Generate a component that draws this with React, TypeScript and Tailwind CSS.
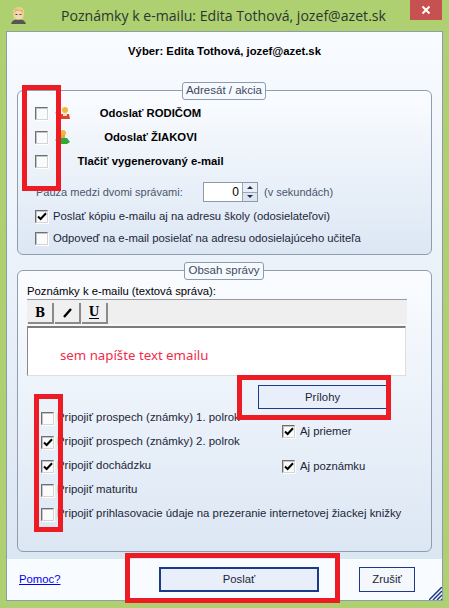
import type { ReactNode } from "react";

const font = { fontFamily: '"Liberation Sans", Arial, sans-serif' };

function CheckBox({ checked = false, className = "" }: { checked?: boolean; className?: string }) {
  return (
    <span
      className={`flex size-[13px] shrink-0 items-center justify-center border border-t-[#6f6f6f] border-l-[#6f6f6f] border-r-[#d4d4d4] border-b-[#d4d4d4] bg-[#f9fbfd] shadow-[1px_1px_0_#fff,inset_1px_1px_0_#c4c4c4] ${className}`}
    >
      {checked && (
        <svg width="10" height="9" viewBox="0 0 10 9">
          <path d="M1 4.5 L3.6 7 L9 1.2" fill="none" stroke="#000" strokeWidth="2" />
        </svg>
      )}
    </span>
  );
}

function Legend({ children, className }: { children: ReactNode; className: string }) {
  return (
    <span
      className={`absolute top-[-9px] flex h-[18px] items-center justify-center rounded-[3px] border border-[#8c9bb2] bg-[#f6f9fe] text-[11.5px] text-[#3c4a62] ${className}`}
    >
      {children}
    </span>
  );
}

function Group({ legend, legendClass, className, children }: { legend: string; legendClass: string; className: string; children: ReactNode }) {
  return (
    <div className={`relative mx-[10px] rounded-[6px] border border-[#8f9db1] bg-gradient-to-b from-[#fafcff] to-[#dce7f4] ${className}`}>
      <Legend className={legendClass}>{legend}</Legend>
      {children}
    </div>
  );
}

function Overlay({ className }: { className: string }) {
  return <div className={`pointer-events-none absolute border-[5px] border-[#ed1c24] ${className}`} />;
}

function ParentIcon() {
  return (
    <svg width="16" height="16" viewBox="0 0 16 16" className="shrink-0">
      <path d="M0 8 L4 4 L4 12 Z" fill="#7fb0ea" />
      <circle cx="10" cy="5" r="3" fill="#f0b93a" />
      <path d="M5 14 L6 9 L14 9 L15 14 Z" fill="#e0402e" />
      <rect x="8" y="8" width="4" height="3" fill="#f5e6c0" />
    </svg>
  );
}

function StudentIcon() {
  return (
    <svg width="16" height="16" viewBox="0 0 16 16" className="shrink-0">
      <path d="M0 11 L3 9 L3 13 Z" fill="#3c9a3c" />
      <circle cx="8" cy="4" r="3" fill="#f0b93a" />
      <rect x="5" y="6" width="5" height="4" fill="#e8a838" />
      <path d="M4 15 L6 9 L12 9 L15 13 L12 15 Z" fill="#2ea83a" />
    </svg>
  );
}

function Avatar() {
  return (
    <svg width="17" height="17" viewBox="0 0 17 17" className="shrink-0">
      <path d="M3 8 C2 2 6 0 9 0 C13 0 15 3 14 8 L13 12 L4 12 Z" fill="#e8d28a" />
      <ellipse cx="8.5" cy="8" rx="4" ry="4.5" fill="#f6d6b4" />
      <path d="M4 7 C6 3 10 3 13 6 L13 3 L5 2 Z" fill="#d9bc6a" />
      <rect x="5.5" y="7" width="2" height="1" fill="#444" />
      <rect x="9.5" y="7" width="2" height="1" fill="#444" />
      <path d="M1 17 C2 13 5 12 8 13 C12 12 15 13 16 17 Z" fill="#555" />
    </svg>
  );
}

function AddresseeRow({ icon, label }: { icon?: ReactNode; label: string }) {
  return (
    <div className="flex h-[24px] items-center">
      <CheckBox />
      <span className="ml-[6px] flex w-[17px] justify-center">{icon}</span>
      <span className="w-[159px] text-center text-[11.3px] font-bold text-black">{label}</span>
    </div>
  );
}

function AttachRow({ checked, label, extra, raised }: { checked?: boolean; label: string; extra?: string; raised?: boolean }) {
  return (
    <div className="flex h-[24px] items-center">
      <CheckBox checked={checked} />
      <span className="ml-[3px] w-[225px] whitespace-nowrap text-[11.4px] text-[#1c2638]">{label}</span>
      {extra && (
        <span className={`flex items-center ${raised ? "-translate-y-[11px]" : ""}`}>
          <CheckBox checked />
          <span className="ml-[5px] text-[11.3px] text-[#1c2638]">{extra}</span>
        </span>
      )}
    </div>
  );
}

function Tool({ children, className = "" }: { children: ReactNode; className?: string }) {
  return (
    <span
      className={`flex h-[21px] w-[26px] items-center justify-center border-r-2 border-b-2 border-[#8a8a8a] bg-[#f0f0f0] text-[12px] font-bold text-black ${className}`}
      style={{ fontFamily: '"DejaVu Serif", serif' }}
    >
      {children}
    </span>
  );
}

export default function App() {
  return (
    <div className="relative flex h-[608px] w-[449px] flex-col overflow-hidden bg-[#aed070]" style={font}>
      {/* title bar */}
      <div className="relative flex h-[31px] shrink-0 items-center pl-[10px]">
        <Avatar />
        <span className="ml-[34px] whitespace-nowrap text-[14.1px] text-[#2c3630]" style={{ fontFamily: '"Open Sans", sans-serif' }}>
          Poznámky k e-mailu: Edita Tothová, jozef@azet.sk
        </span>
        <span className="absolute top-0 right-[7px] flex h-[20px] w-[32px] items-center justify-center bg-[#c75050]">
          <svg width="10" height="10" viewBox="0 0 10 10">
            <path d="M1.5 1.5 L8.5 8.5 M8.5 1.5 L1.5 8.5" stroke="#fff" strokeWidth="2" />
          </svg>
        </span>
      </div>

      {/* client */}
      <div className="mx-[6px] flex h-[570px] flex-col border border-[#8d9ca8] bg-[#f8fbff]">
        <div className="flex h-[527px] flex-col bg-gradient-to-b from-[#f8fbff] to-[#dbe6f3]">
          <div className="flex h-[46px] items-center justify-center pb-[8px] text-[11.3px] font-bold text-black">
            Výber: Edita Tothová, jozef@azet.sk
          </div>

          <Group legend="Adresát / akcia" legendClass="left-[164px] w-[84px]" className="mt-[12px] h-[165px] pt-[10px] pl-[17px]">
            <AddresseeRow icon={<ParentIcon />} label="Odoslať RODIČOM" />
            <AddresseeRow icon={<StudentIcon />} label="Odoslať ŽIAKOVI" />
            <AddresseeRow label="Tlačiť vygenerovaný e-mail" />
            <div className="mt-[7px] flex h-[24px] items-center text-[11px] text-[#4a566b]">
              <span className="ml-[1px] w-[167px] whitespace-nowrap">Pauza medzi dvomi správami:</span>
              <span className="flex h-[20px] w-[55px] border border-[#8e9aac] bg-white">
                <span className="flex flex-1 items-center justify-end pr-[3px] text-[12px] text-black">0</span>
                <span className="flex w-[15px] flex-col border-l border-[#9aa6b6]">
                  <span className="flex flex-1 items-center justify-center border-b border-[#9aa6b6] bg-[#e9eff7]">
                    <span className="border-x-[3px] border-b-[3px] border-x-transparent border-b-[#1c2f4a]" />
                  </span>
                  <span className="flex flex-1 items-center justify-center bg-[#dde5f0]">
                    <span className="border-x-[3px] border-t-[3px] border-x-transparent border-t-[#1c2f4a]" />
                  </span>
                </span>
              </span>
              <span className="ml-[6px] whitespace-nowrap">(v sekundách)</span>
            </div>
            <div className="mt-[1px] flex h-[22px] items-center text-[11.3px] text-[#1c2638]">
              <CheckBox checked />
              <span className="ml-[5px] whitespace-nowrap">Poslať kópiu e-mailu aj na adresu školy (odosielateľovi)</span>
            </div>
            <div className="flex h-[22px] items-center text-[11.3px] text-[#1c2638]">
              <CheckBox />
              <span className="ml-[5px] whitespace-nowrap">Odpoveď na e-mail posielať na adresu odosielajúceho učiteľa</span>
            </div>
          </Group>

          <Group legend="Obsah správy" legendClass="left-[166px] w-[80px]" className="mt-[15px] h-[282px] pt-[12px] pl-[9px]">
            <div className="h-[16px] text-[11.3px] leading-[16px] text-black">Poznámky k e-mailu (textová správa):</div>
            <div className="flex h-[25px] w-[380px] gap-[1px] border-t border-[#9a9a9a] bg-[#efefef] pt-[3px] pl-[1px]">
              <Tool>B</Tool>
              <Tool>
                <svg width="11" height="10" viewBox="0 0 11 10">
                  <path d="M9 1 L2 9" stroke="#000" strokeWidth="2.4" />
                </svg>
              </Tool>
              <Tool>
                <span className="border-b border-black leading-[12px]">U</span>
              </Tool>
            </div>
            <div
              className="mt-[2px] flex h-[50px] w-[379px] items-center border border-t-2 border-[#dedede] border-t-[#7c7c7c] border-l-[#8a8a8a] bg-white pt-[9px] pl-[32px] text-[13.25px] text-[#f02c4c]"
              style={{ fontFamily: '"Noto Sans", sans-serif' }}
            >
              sem napíšte text emailu
            </div>
            <div className="mt-[9px] flex justify-end pr-[44px]">
              <span className="flex h-[24px] w-[129px] items-center justify-center border border-[#1c3a8a] bg-[#e8effa] text-[11.3px] text-[#1c2638]">
                Prílohy
              </span>
            </div>
            <div className="mt-[-3px] ml-[14px]">
              <AttachRow label="Pripojiť prospech (známky) 1. polrok" />
              <AttachRow checked label="Pripojiť prospech (známky) 2. polrok" extra="Aj priemer" raised />
              <AttachRow checked label="Pripojiť dochádzku" extra="Aj poznámku" />
              <AttachRow label="Pripojiť maturitu" />
              <AttachRow label="Pripojiť prihlasovacie údaje na prezeranie internetovej žiackej knižky" />
            </div>
          </Group>
        </div>

        {/* footer */}
        <div className="relative flex flex-1 items-center pl-[12px] text-[11.3px]">
          <span className="w-[140px] text-[#0000ee] underline">Pomoc?</span>
          <span className="flex h-[25px] w-[160px] items-center justify-center border-[2px] border-[#1c3a8a] bg-[#e8effa] text-[#1c2638]">
            Poslať
          </span>
          <span className="ml-[40px] flex h-[25px] w-[56px] items-center justify-center border border-[#1c3a8a] bg-[#f4f7fc] text-[#1c2638]">
            Zrušiť
          </span>
          <svg width="13" height="13" viewBox="0 0 13 13" className="absolute right-0 bottom-0">
            <path d="M0 13 L13 0 M4 13 L13 4 M8 13 L13 8 M12 13 L13 12" stroke="#1c3a8a" strokeWidth="1.5" />
          </svg>
        </div>
      </div>

      {/* red markup drawn over the dialog */}
      <Overlay className="top-[85px] left-[22px] h-[106px] w-[39px]" />
      <Overlay className="top-[394px] left-[34px] h-[138px] w-[29px]" />
      <Overlay className="top-[375px] left-[237px] h-[45px] w-[154px]" />
      <Overlay className="top-[553px] left-[125px] h-[50px] w-[215px]" />
    </div>
  );
}
